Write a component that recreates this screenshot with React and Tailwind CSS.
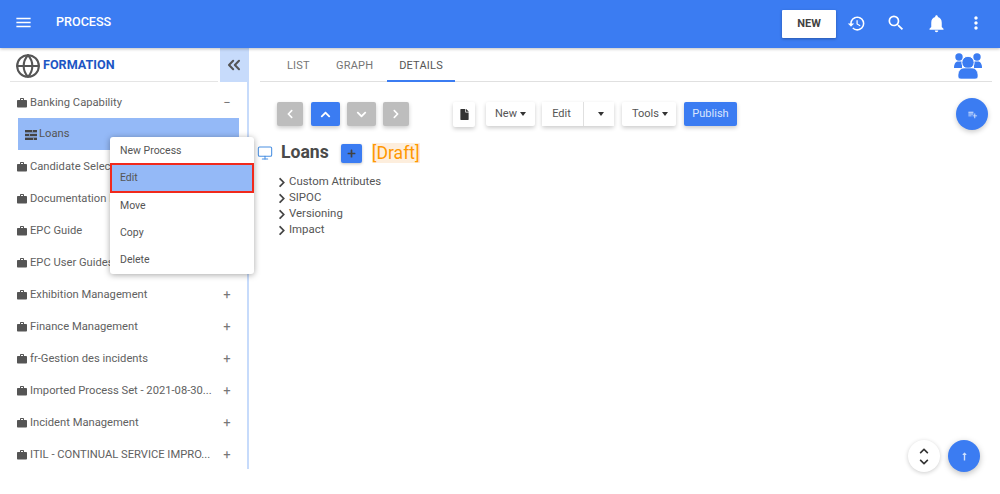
import { Globe, Monitor, ChevronsLeft } from "lucide-react";
import {
  FaChevronLeft,
  FaChevronRight,
  FaChevronUp,
  FaChevronDown,
  FaFile,
  FaLongArrowAltUp,
  FaPlus,
} from "react-icons/fa";
import { MdMenu, MdHistory, MdSearch, MdNotifications, MdMoreVert, MdPlaylistAdd, MdWork } from "react-icons/md";

const rows = [
  "Candidate Selection",
  "Documentation Management",
  "EPC Guide",
  "EPC User Guides",
  "Exhibition Management",
  "Finance Management",
  "fr-Gestion des incidents",
  "Imported Process Set - 2021-08-30...",
  "Incident Management",
  "ITIL - CONTINUAL SERVICE IMPRO...",
];

const menu = ["New Process", "Edit", "Move", "Copy", "Delete"];

function Row({ label, sign = "+" }) {
  return (
    <div className="h-8 flex items-center pl-4 pr-[14px] pt-[2px] text-[11.2px] text-[#616161]">
      <MdWork className="w-[12px] h-[12px] mr-[2px] shrink-0 text-[#555]" />
      <span className="flex-1 whitespace-nowrap">{label}</span>
      <span className="w-[12px] text-center text-[13px] text-[#777] ml-1">{sign}</span>
    </div>
  );
}

function NavButton({ children, active, className }) {
  return (
    <button
      className={`h-[24px] flex items-center justify-center rounded-[2px] shadow-[0_2px_4px_rgba(0,0,0,0.2)] text-white ${
        active ? "bg-[#3b7cf2]" : "bg-[#bdbdbd]"
      } ${className}`}
    >
      {children}
    </button>
  );
}

function WhiteButton({ children, className }) {
  return (
    <button
      className={`h-[24px] flex items-center justify-center bg-white rounded-[2px] shadow-[0_2px_4px_rgba(0,0,0,0.2)] text-[11px] text-[#555] ${className}`}
    >
      {children}
    </button>
  );
}

function Caret() {
  return <span className="inline-block ml-[3px] border-x-[3.5px] border-x-transparent border-t-[4px] border-t-[#333]" />;
}

function TreeItem({ label }) {
  return (
    <div className="h-4 flex items-center text-[11.4px] text-[#555]">
      <FaChevronRight className="w-[10px] h-[11px] mr-[2px] text-[#444]" />
      {label}
    </div>
  );
}

function ListIcon() {
  return (
    <svg width="12" height="10" viewBox="0 0 12 10" className="mr-[2px] shrink-0">
      <rect x="0" y="0" width="12" height="2.4" fill="#444" />
      <rect x="0" y="3.8" width="12" height="2.4" fill="#444" />
      <rect x="0" y="7.6" width="12" height="2.4" fill="#444" />
      <rect x="7" y="0" width="1" height="2.4" fill="#7f8fa8" />
      <rect x="4" y="3.8" width="1" height="2.4" fill="#7f8fa8" />
      <rect x="8" y="7.6" width="1" height="2.4" fill="#7f8fa8" />
    </svg>
  );
}

function TeamIcon({ className }) {
  return (
    <svg viewBox="0 0 28 26" className={className} fill="#3b7cf2">
      <circle cx="5" cy="4" r="3.7" />
      <circle cx="23" cy="4" r="3.7" />
      <path d="M0 15c0-4 1.5-6.5 4-6.5h4V15z" />
      <path d="M28 15c0-4-1.5-6.5-4-6.5h-4V15z" />
      <circle cx="14" cy="9.5" r="6.2" stroke="#fff" strokeWidth="1" />
      <path d="M4 23c0-5 2.5-8 6-8h8c3.5 0 6 3 6 8 0 2-1 3-3 3H7c-2 0-3-1-3-3z" stroke="#fff" strokeWidth="0.6" />
    </svg>
  );
}

export default function App() {
  return (
    <div className="relative w-[1000px] h-[494px] overflow-hidden bg-white font-['Roboto',sans-serif]">
      <header className="h-12 bg-[#3b7cf2] shadow-[0_1px_3px_rgba(0,0,0,0.25)] flex items-center text-white relative">
        <MdMenu className="w-[19px] h-[19px] ml-[14px] -mt-[4px]" />
        <span className="ml-[23px] text-[12.6px] font-medium -mt-[4px]">PROCESS</span>
        <div className="ml-auto flex items-center">
          <button className="w-[54px] h-[28px] bg-white rounded-[1px] text-[#424242] text-[11px] font-bold shadow-[0_1px_3px_rgba(0,0,0,0.3)]">
            NEW
          </button>
          <MdHistory className="w-[19px] h-[19px] ml-[11px] -mt-[2px]" />
          <MdSearch className="w-[20px] h-[20px] ml-[20px] -mt-[3px]" />
          <MdNotifications className="w-[21px] h-[21px] ml-[20px] -mt-[2px]" />
          <MdMoreVert className="w-[20px] h-[20px] ml-[19px] mr-[14px] -mt-[2px]" />
        </div>
      </header>

      <div className="flex">
        <aside className="w-[249px] shrink-0">
          <div className="h-[34px] flex">
            <div className="ml-[10px] flex-1 flex items-center pl-[5px] pt-[2px] border-b border-[#e5e5e5]">
              <Globe className="w-[26px] h-[26px] text-[#555]" strokeWidth={1.9} />
              <span className="ml-[2px] text-[12.6px] font-bold text-[#1d56c4]">FORMATION</span>
            </div>
            <div className="w-[29px] ml-[2px] pr-[2px] bg-[#c7dbfb] flex items-center justify-center">
              <ChevronsLeft className="w-[20px] h-[20px] text-[#555]" strokeWidth={2.5} />
            </div>
          </div>
          <div className="h-[387px] border-r-[2px] border-[#c7dbfb] pt-1">
            <Row label="Banking Capability" sign="−" />
            <div className="h-8 ml-[18px] mr-2 bg-[#94b9f7] flex items-center pl-[7px] pt-[1px] text-[11.2px] text-[#555]">
              <ListIcon />
              Loans
            </div>
            {rows.map((r) => (
              <Row key={r} label={r} />
            ))}
          </div>
        </aside>

        <main className="flex-1 min-w-0 relative">
          <div className="h-[34px] ml-[11px] mr-2 border-b border-[#e0e0e0] flex text-[11px] text-[#757575] tracking-[0.2px]">
            <span className="w-[76px] pl-[27px] pt-[10px]">LIST</span>
            <span className="w-[51px] pt-[10px]">GRAPH</span>
            <span className="w-[68px] h-[34px] pt-[10px] text-center text-[#555] border-b-2 border-[#3b7cf2]">DETAILS</span>
          </div>

          <div className="flex items-start mt-5 ml-[28px]">
            <NavButton className="w-[26px]">
              <FaChevronLeft className="w-[10px] h-[10px]" />
            </NavButton>
            <NavButton active className="w-[29px] ml-2">
              <FaChevronUp className="w-[11px] h-[11px]" />
            </NavButton>
            <NavButton className="w-[29px] ml-[7px]">
              <FaChevronDown className="w-[11px] h-[11px]" />
            </NavButton>
            <NavButton className="w-[26px] ml-[7px]">
              <FaChevronRight className="w-[10px] h-[10px]" />
            </NavButton>
            <WhiteButton className="w-[22px] ml-[44px] h-[25px]">
              <FaFile className="w-[9px] h-[11px] text-[#333]" />
            </WhiteButton>
            <WhiteButton className="w-[49px] ml-[11px]">
              New
              <Caret />
            </WhiteButton>
            <div className="flex ml-[7px] rounded-[2px] shadow-[0_2px_4px_rgba(0,0,0,0.2)]">
              <button className="w-[42px] h-[24px] pr-[2px] bg-white text-[11px] text-[#555] border-r border-[#e0e0e0]">Edit</button>
              <button className="w-[30px] h-[24px] bg-white flex items-center justify-center">
                <Caret />
              </button>
            </div>
            <WhiteButton className="w-[54px] ml-2 pl-[2px]">
              Tools
              <Caret />
            </WhiteButton>
            <button className="w-[53px] h-[24px] ml-2 bg-[#3b7cf2] text-[#dbe7fd] text-[11px] rounded-[2px] shadow-[0_2px_4px_rgba(0,0,0,0.2)]">
              Publish
            </button>
          </div>

          <div className="flex items-center mt-4 ml-2 h-[19px]">
            <Monitor className="w-[16px] h-[16px] text-[#4a90e2]" strokeWidth={1.6} />
            <span className="ml-2 text-[17.6px] font-bold text-[#4a4a4a]">Loans</span>
            <span className="ml-[12px] mt-[1px] w-[21px] h-[19px] bg-[#3b7cf2] rounded-[2px] flex items-center justify-center shadow-[0_1px_3px_rgba(0,0,0,0.25)]">
              <FaPlus className="w-[9px] h-[9px] text-[#424242]" />
            </span>
            <span className="ml-[10px] text-[17.6px] leading-[20px] text-[#ff9800] bg-[#fdeedd]">[Draft]</span>
          </div>

          <div className="mt-3 ml-[28px]">
            <TreeItem label="Custom Attributes" />
            <TreeItem label="SIPOC" />
            <TreeItem label="Versioning" />
            <TreeItem label="Impact" />
          </div>
        </main>
      </div>

      {/* team icon, floats over the tab bar */}
      <TeamIcon className="absolute left-[954px] top-[53px] w-[28px] h-[26px]" />

      {/* context menu */}
      <div className="absolute left-[110px] top-[137px] w-[144px] bg-white rounded-[3px] shadow-[0_1px_6px_rgba(0,0,0,0.35)] pb-[1px] text-[10.5px] text-[#555]">
        {menu.map((m) =>
          m === "Edit" ? (
            <div key={m} className="h-[30px] -mt-[1px] -mb-[1px] bg-[#94b9f7] border-[2px] border-[#f1291c] flex items-center pl-2">
              {m}
            </div>
          ) : (
            <div key={m} className="h-[27px] flex items-center pl-[10px]">
              {m}
            </div>
          ),
        )}
      </div>

      {/* floating buttons */}
      <div className="absolute left-[956px] top-[98px] w-8 h-8 rounded-full bg-[#3b7cf2] flex items-center justify-center shadow-[0_2px_5px_rgba(0,0,0,0.2)]">
        <MdPlaylistAdd className="w-[11px] h-[11px] text-[#dbe7fd]" />
      </div>
      <div className="absolute left-[908px] top-[440px] w-8 h-8 rounded-full bg-white flex flex-col items-center justify-center gap-[1px] shadow-[0_1px_4px_rgba(0,0,0,0.2)]">
        <FaChevronUp className="w-[12px] h-[10px] text-[#333]" />
        <FaChevronDown className="w-[12px] h-[10px] text-[#333]" />
      </div>
      <div className="absolute left-[948px] top-[440px] w-8 h-8 rounded-full bg-[#3b7cf2] flex items-center justify-center shadow-[0_2px_6px_rgba(0,0,0,0.25)]">
        <FaLongArrowAltUp className="w-[9px] h-[9px] text-[#cfe0fc]" />
      </div>
    </div>
  );
}
